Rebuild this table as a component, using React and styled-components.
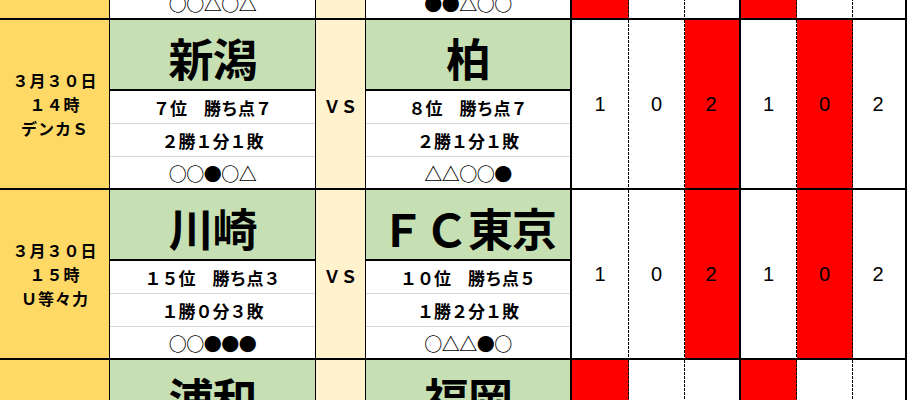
import React from "react";
import styled, { createGlobalStyle } from "styled-components";

const GlobalStyle = createGlobalStyle`
  html, body {
    margin: 0;
    padding: 0;
    background: #fff;
  }
  body {
    font-family: "Noto Sans CJK JP", "Noto Sans", sans-serif;
    color: #000;
  }
`;

// first and last blocks are only partly in view, so they only carry the visible parts
const matches = [
  {
    date: [],
    home: { name: "", rank: "", record: "", form: "○○△○△" },
    away: { name: "", rank: "", record: "", form: "●●△○○" },
    scores: ["", "", "", "", "", ""],
    red: [0, 3],
  },
  {
    date: ["３月３０日", "１４時", "デンカＳ"],
    home: { name: "新潟", rank: "７位　勝ち点７", record: "２勝１分１敗", form: "○○●○△" },
    away: { name: "柏", rank: "８位　勝ち点７", record: "２勝１分１敗", form: "△△○○●" },
    scores: ["1", "0", "2", "1", "0", "2"],
    red: [2, 4],
  },
  {
    date: ["３月３０日", "１５時", "Ｕ等々力"],
    home: { name: "川崎", rank: "１５位　勝ち点３", record: "１勝０分３敗", form: "○○●●●" },
    away: { name: "ＦＣ東京", rank: "１０位　勝ち点５", record: "１勝２分１敗", form: "○△△●○" },
    scores: ["1", "0", "2", "1", "0", "2"],
    red: [2, 4],
  },
  {
    date: [],
    home: { name: "浦和", rank: "", record: "", form: "" },
    away: { name: "福岡", rank: "", record: "", form: "" },
    scores: ["", "", "", "", "", ""],
    red: [0, 3],
  },
];

const scoreWidths = [57, 56, 56, 56, 56, 54];
const edges = ["dash", "dash", "solid", "dash", "dash", "solid"];

const Sheet = styled.div`
  width: 908px;
  height: 400px;
  overflow: hidden;
`;

const Track = styled.div`
  margin-top: -150px;
`;

const Block = styled.div`
  display: grid;
  grid-template-columns: 110px 206px 50px 206px ${scoreWidths.map((w) => w + "px").join(" ")};
  width: 907px;
  height: 168px;
  border-bottom: 2px solid #000;
`;

const DateCell = styled.div`
  box-sizing: border-box;
  background: #ffd966;
  border-right: 1px solid #000;
  display: flex;
  flex-direction: column;
  align-items: center;
  justify-content: center;
  gap: 0.5px;
  font-size: 16px;
  font-weight: 700;
  letter-spacing: 1px;
  line-height: 23.2px;
  padding-top: 1px;
`;

const DateLine = styled.div`
  padding-left: 1px;
`;

const Team = styled.div`
  box-sizing: border-box;
  display: grid;
  grid-template-rows: 71px 33px 33px 1fr;
  border-right: ${(p) => (p.last ? "2px" : "1px")} solid #000;
  background: #fff;
`;

const TeamName = styled.div`
  box-sizing: border-box;
  background: #c6e0b4;
  border-bottom: 2px solid #000;
  display: flex;
  align-items: center;
  justify-content: center;
  font-size: 45px;
  font-weight: 700;
  line-height: 1;
  padding-top: 6px;
  letter-spacing: -1px;
`;

const InfoRow = styled.div`
  box-sizing: border-box;
  display: flex;
  align-items: center;
  justify-content: center;
  font-size: 17px;
  font-weight: 700;
  line-height: 1;
  padding-top: 1px;
  border-bottom: ${(p) => (p.last ? "none" : "1px solid #d9d9d9")};
`;

const FormRow = styled(InfoRow)`
  font-size: 18px;
  letter-spacing: -0.5px;
`;

const Vs = styled.div`
  box-sizing: border-box;
  background: #fff2cc;
  border-right: 1px solid #000;
  display: flex;
  align-items: center;
  justify-content: center;
  font-size: 17px;
  font-weight: 700;
  padding-top: 2px;
`;

const ScoreCell = styled.div`
  box-sizing: border-box;
  background-color: ${(p) => (p.red ? "#ff0000" : "#fff")};
  display: flex;
  align-items: center;
  justify-content: center;
  font-family: "Liberation Sans", Arial, sans-serif;
  font-size: 20px;
  padding-top: 1px;
  padding-right: ${(p) => (p.edge === "solid" ? "2px" : "1px")};
  ${(p) =>
    p.edge === "solid"
      ? "border-right: 2px solid #000;"
      : `background-image: repeating-linear-gradient(to bottom, #000 0 3px, transparent 3px 4px);
         background-repeat: no-repeat;
         background-size: 1px 100%;
         background-position: right top;`}
`;

const TeamBlock = ({ team, last }) => (
  <Team last={last}>
    <TeamName>{team.name}</TeamName>
    <InfoRow>{team.rank}</InfoRow>
    <InfoRow>{team.record}</InfoRow>
    <FormRow last>{team.form}</FormRow>
  </Team>
);

const MatchBlock = ({ match }) => (
  <Block>
    <DateCell>
      {match.date.map((line, i) => (
        <DateLine key={i}>{line}</DateLine>
      ))}
    </DateCell>
    <TeamBlock team={match.home} />
    <Vs>{match.date.length ? "ＶＳ" : ""}</Vs>
    <TeamBlock team={match.away} last />
    {match.scores.map((s, i) => (
      <ScoreCell key={i} red={match.red.includes(i)} edge={edges[i]}>
        {s}
      </ScoreCell>
    ))}
  </Block>
);

export default function App() {
  return (
    <Sheet>
      <GlobalStyle />
      <Track>
        {matches.map((m, i) => (
          <MatchBlock key={i} match={m} />
        ))}
      </Track>
    </Sheet>
  );
}
